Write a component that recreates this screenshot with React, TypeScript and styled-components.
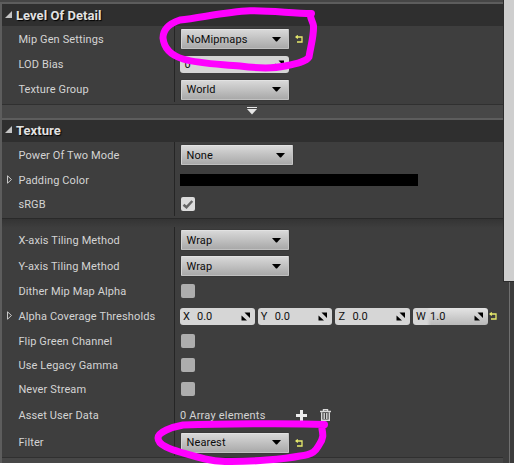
import React from "react";
import styled, { createGlobalStyle } from "styled-components";

const Global = createGlobalStyle`
  html, body { margin: 0; background: #fff; }
  * { box-sizing: border-box; }
`;

const Window = styled.div`
  position: relative;
  width: 514px;
  height: 466px;
  overflow: hidden;
  font-family: Roboto, "Liberation Sans", sans-serif;
  font-size: 11px;
  color: #d4d4d4;
`;

const Layout = styled.div`
  display: flex;
  height: 463px;
  background: #3e3e3e;
`;

const Panel = styled.div`
  width: 503px;
  padding-top: 2px;
  background: #464646;
`;

const Category = styled.section`
  border-top: 2px solid #5d5d5d;
  border-left: 2px solid #5d5d5d;
`;

const Header = styled.header<{ $lift?: number }>`
  display: flex;
  align-items: center;
  height: 22px;
  padding-left: 3px;
  padding-bottom: ${(p) => p.$lift ?? 0}px;
  gap: 4px;
  background: #2f2f2f;
  color: #e2e2e2;
  font-size: 13px;
  font-weight: 700;
  letter-spacing: 0.05px;
  text-shadow: 1px 1px 1px #000;
`;

const Rows = styled.div<{ $h: number; $shade?: boolean }>`
  height: ${(p) => p.$h}px;
  background: ${(p) => (p.$shade ? "linear-gradient(#343434, #3e3e3e 9px)" : "#3e3e3e")};
  padding-top: ${(p) => (p.$shade ? 8 : 0)}px;
`;

const Divider = styled.div`
  height: 1px;
  background: #292929;
`;

const Footer = styled.footer<{ $h: number }>`
  display: flex;
  justify-content: center;
  padding: 2px 1px 0 0;
  height: ${(p) => p.$h}px;
  border-top: 1px solid #303030;
  background: #474747;
`;

const RowBox = styled.div<{ $h: number }>`
  display: flex;
  height: ${(p) => p.$h}px;
`;

const Name = styled.div`
  display: flex;
  align-items: center;
  width: 173px;
  padding-left: 4px;
  border-right: 1px solid #252525;
  white-space: nowrap;
`;

const ArrowSlot = styled.span`
  display: flex;
  width: 12.4px;
  flex: none;
  padding-bottom: 2px;
`;

const Label = styled.span`
  letter-spacing: 0.12px;
`;

const Value = styled.div`
  display: flex;
  align-items: center;
  padding-left: 6px;
`;

const Select = styled.div<{ $w: number }>`
  display: flex;
  align-items: center;
  justify-content: space-between;
  width: ${(p) => p.$w}px;
  height: 20px;
  padding: 0 7px 0 4.5px;
  border: 1px solid #d2d2d2;
  border-color: #e2e2e2 #c4c4c4 #c0c0c0 #d4d4d4;
  border-radius: 1px;
  box-shadow: 0 0 1px #181818;
  background: linear-gradient(#d8d8d8, #a9a9a9);
  color: #0c0c0c;
  letter-spacing: 0.1px;
`;

const Reset = styled.span<{ $gap: number }>`
  display: flex;
  margin-left: ${(p) => p.$gap}px;
`;

const Spin = styled.div<{ $w: number; $edited?: boolean; $inset?: number }>`
  display: flex;
  align-items: center;
  width: ${(p) => p.$w}px;
  height: 17px;
  padding: 0 5px 0 ${(p) => p.$inset ?? 3}px;
  border-radius: 3px;
  background: ${(p) =>
    p.$edited
      ? "linear-gradient(90deg, #d6d6d6 14px, transparent 18px), linear-gradient(#e4e4e4, #b8b8b8)"
      : "#d6d6d6"};
  color: #111;
`;

const Axis = styled.span`
  width: 14px;
`;

const Grow = styled.span`
  flex: 1;
`;

const Vector = styled.div`
  display: flex;
  gap: 3px;
  margin-left: -1px;
`;

const Swatch = styled.div`
  width: 238px;
  height: 12px;
  margin-left: -1px;
  background: #000;
`;

const Check = styled.div<{ $on?: boolean }>`
  display: flex;
  align-items: center;
  justify-content: center;
  width: 14px;
  height: 14px;
  border-radius: 2px;
  background: ${(p) => (p.$on ? "#dcdcdc" : "#adadad")};
`;

const ArrayText = styled.span`
  width: 116px;
  margin-left: -1px;
  letter-spacing: 0.2px;
`;

const ArrayTools = styled.div`
  display: flex;
  align-items: center;
  gap: 13px;
`;

const Gutter = styled.div`
  display: flex;
  flex-direction: column;
  width: 11px;
  border-left: 1px solid #2c2c2c;
`;

const Thumb = styled.div`
  height: 281px;
  background: #cecece;
`;

const Track = styled.div`
  flex: 1;
  margin-left: -1px;
  border-top: 1px solid #2c2c2c;
  background: linear-gradient(90deg, #3e3e3e 6px, #707070 6px 7px, #3c3c3c 7px);
`;

const Ink = styled.svg`
  position: absolute;
  inset: 0;
  pointer-events: none;
`;

const Expanded = () => (
  <svg width="7" height="8" viewBox="0 0 7 8"><path d="M7 0V7H0Z" fill="#c4c4c4" /></svg>
);
const Collapsed = () => (
  <svg width="7" height="9" viewBox="0 0 7 9"><path d="M1.500 0.800V8.200L5.500 4.500Z" fill="none" stroke="#c8c8c8" /></svg>
);
const Caret = () => (
  <svg width="9" height="5" viewBox="0 0 9 5"><path d="M0 0H9L5 4.600H4Z" fill="#000" /></svg>
);
const ResetIcon = () => (
  <svg width="8" height="8" viewBox="0 0 8 8">
    <path d="M1.500 2H7V7H2" fill="none" stroke="#e8ec6c" strokeWidth="1.300" />
    <path d="M0 2L2.800 -0.300V4.300Z" fill="#e8ec6c" />
  </svg>
);
const Drag = () => (
  <svg width="9" height="9" viewBox="0 0 9 9"><path d="M3.500 0.500H9V6ZM0.500 3.500L6 8.500H0.500Z" fill="#000" /></svg>
);
const Tick = () => (
  <svg width="12" height="12" viewBox="0 0 12 12">
    <path d="M1.500 6.700L4.500 9.300L10.300 3" fill="none" stroke="#666" strokeWidth="2.500" />
  </svg>
);
const More = () => (
  <svg width="10" height="8" viewBox="0 0 10 8">
    <path d="M0 2H10L5 7.600Z" fill="#e6e6e6" />
    <path d="M0 0.500H10" stroke="#e6e6e6" />
  </svg>
);
const Plus = () => (
  <svg width="11" height="11" viewBox="0 0 11 11">
    <path d="M5.500 0V11M0 5.500H11" stroke="#ececec" strokeWidth="3" />
  </svg>
);
const Trash = () => (
  <svg width="11" height="12" viewBox="0 0 11 12">
    <path d="M0 2.500H11M3.500 2V0.600H7.500V2M1.700 3.500V11.300H9.300V3.500M4.200 4V10M6.800 4V10" fill="none" stroke="#d8d8d8" strokeWidth="1.400" />
  </svg>
);

type RowProps = { h: number; label: string; arrow?: boolean; children: React.ReactNode };
const Row = ({ h, label, arrow, children }: RowProps) => (
  <RowBox $h={h}>
    <Name>
      <ArrowSlot>{arrow && <Collapsed />}</ArrowSlot>
      <Label>{label}</Label>
    </Name>
    <Value>{children}</Value>
  </RowBox>
);

const Dropdown = ({ text, w = 107.5, reset }: { text: string; w?: number; reset?: boolean }) => (
  <>
    <Select $w={w}>{text}<Caret /></Select>
    {reset && <Reset $gap={6.5}><ResetIcon /></Reset>}
  </>
);

const axes = [
  { name: "X", value: "0.0" },
  { name: "Y", value: "0.0" },
  { name: "Z", value: "0.0" },
  { name: "W", value: "1.0" },
];

export default function App() {
  return (
    <Window>
      <Global />
      <Layout>
        <Panel>
          <Category>
            <Header><Expanded />Level Of Detail</Header>
            <Rows $h={78}>
              <Row h={26} label="Mip Gen Settings"><Dropdown text="NoMipmaps" reset /></Row>
              <Row h={25} label="LOD Bias">
                <Vector><Spin $w={109} $inset={4.5}><Grow>0</Grow><Drag /></Spin></Vector>
              </Row>
              <Row h={25} label="Texture Group"><Dropdown text="World" /></Row>
            </Rows>
            <Footer $h={14}><More /></Footer>
          </Category>
          <Category>
            <Header $lift={2}><Expanded />Texture</Header>
            <Rows $h={76}>
              <Row h={26} label="Power Of Two Mode"><Dropdown text="None" w={111.5} /></Row>
              <Row h={24} label="Padding Color" arrow><Swatch /></Row>
              <Row h={24} label="sRGB"><Check $on><Tick /></Check></Row>
            </Rows>
            <Divider />
            <Rows $h={238} $shade>
              <Row h={26} label="X-axis Tiling Method"><Dropdown text="Wrap" /></Row>
              <Row h={26} label="Y-axis Tiling Method"><Dropdown text="Wrap" /></Row>
              <Row h={24} label="Dither Mip Map Alpha"><Check /></Row>
              <Row h={26} label="Alpha Coverage Thresholds" arrow>
                <Vector>
                  {axes.map((a) => (
                    <Spin key={a.name} $w={74.7} $edited={a.name === "W"}>
                      <Axis>{a.name}</Axis><Grow>{a.value}</Grow><Drag />
                    </Spin>
                  ))}
                </Vector>
                <Reset $gap={1}><ResetIcon /></Reset>
              </Row>
              <Row h={24} label="Flip Green Channel"><Check /></Row>
              <Row h={24} label="Use Legacy Gamma"><Check /></Row>
              <Row h={24} label="Never Stream"><Check /></Row>
              <Row h={28} label="Asset User Data">
                <ArrayText>0 Array elements</ArrayText>
                <ArrayTools><Plus /><Trash /></ArrayTools>
              </Row>
              <Row h={27} label="Filter"><Dropdown text="Nearest" reset /></Row>
            </Rows>
            <Footer $h={6} />
          </Category>
        </Panel>
        <Gutter><Thumb /><Track /></Gutter>
      </Layout>
      <Ink width="514" height="466" viewBox="0 0 514 466" fill="none" stroke="#ff00ff" strokeWidth="7" strokeLinecap="round" strokeLinejoin="round">
        <path d="M311.500 13.500C290 13 270 10.500 250 10.800C225 12 200 18 180 20C168 24 163 30 163 38C164 48 170 55 183 59C200 64 220 64 240 66C255 68 272 69 285 66C295 64 306 62 309 57C311 45 314 35 313.500 26C313 22 311 20 310.500 16" />
        <path d="M324.500 424.500C290 423 215 424 183 425C172 427 158 432 158 438C158 446 173 450 183 453C200 458 210 461 225 461.500C250 462 285 459 300 456C315 454 316 450 319 445C324 438 323 434 322 429" />
      </Ink>
    </Window>
  );
}
